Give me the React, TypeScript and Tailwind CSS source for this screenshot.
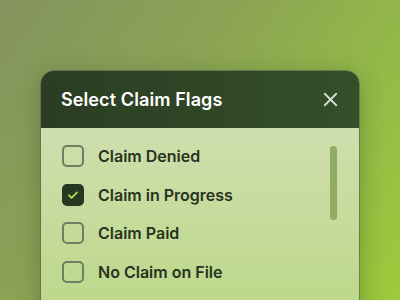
import { X } from "lucide-react";

const flags = [
  { label: "Claim Denied", checked: false },
  { label: "Claim in Progress", checked: true },
  { label: "Claim Paid", checked: false },
  { label: "No Claim on File", checked: false },
];

const Checkbox = ({ checked }: { checked: boolean }) =>
  checked ? (
    <div className="w-[22px] h-[22px] rounded-[5px] bg-[#263822] border-2 border-[#263822] flex items-center justify-center">
      <svg width="14" height="14" viewBox="0 0 24 24" fill="none" stroke="#b8e04c" strokeWidth="3" strokeLinecap="round" strokeLinejoin="round">
        <path d="M5 12.5l4.5 4.5L19 7.5" />
      </svg>
    </div>
  ) : (
    <div className="w-[22px] h-[22px] rounded-[5px] border-2 border-[#6e7e62]" />
  );

export default function App() {
  return (
    <div
      className="w-[400px] h-[300px] overflow-hidden bg-[linear-gradient(125deg,#84935e_0%,#8ca454_40%,#93b948_70%,#9dcb3b_100%)] pt-[70px] px-[40px]"
      style={{ fontFamily: "Inter, 'Noto Sans', sans-serif" }}
    >
      <div className="w-[320px] h-[260px] rounded-t-[14px] overflow-hidden border border-[#4a6650]/70 shadow-[0_6px_24px_rgba(30,50,20,0.3)]">
        <div className="h-[57px] bg-[linear-gradient(90deg,#2b3d23,#344f2a)] flex items-center justify-between pl-[20px] pr-[17px]">
          <span className="text-white text-[18px] font-semibold tracking-[0.1px]">Select Claim Flags</span>
          <X size={23} strokeWidth={1.9} className="text-[#d6ddd2]" />
        </div>
        <div className="h-full bg-[linear-gradient(180deg,#cfdeae_0%,#c2da94_50%,#b3d478_100%)] flex pl-[21px] pr-[22px] pt-[17px]">
          <div className="flex-1 flex flex-col gap-[16.5px]">
            {flags.map((f) => (
              <div key={f.label} className="h-[22px] flex items-center gap-[14px]">
                <Checkbox checked={f.checked} />
                <span className="text-[16px] leading-[22px] font-semibold text-[#27321f]">{f.label}</span>
              </div>
            ))}
          </div>
          <div className="w-[7px] h-[74px] rounded-full bg-[#8fac62] mt-px" />
        </div>
      </div>
    </div>
  );
}
